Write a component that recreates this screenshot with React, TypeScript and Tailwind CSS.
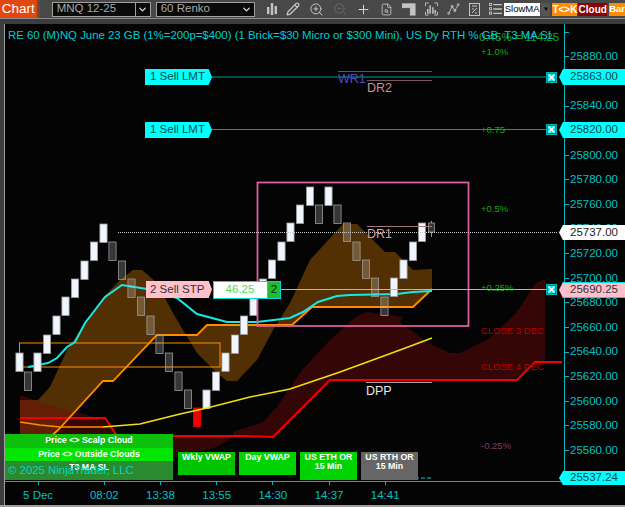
import React from "react";
import { ChevronDown, FileSearch, Pencil, Plus, ZoomIn, ZoomOut } from "lucide-react";

type BrickKind = "up" | "down" | "red";

// [center x, top y, kind] in page coordinates
const BRICKS: [number, number, BrickKind][] = [
  [19.5, 353, "up"], [28, 372, "down"], [37.5, 353, "up"], [47, 335, "up"], [56.5, 316, "up"],
  [65.5, 297, "up"], [75, 279, "up"], [84.5, 261, "up"], [94, 242, "up"], [103.5, 224, "up"],
  [112.5, 242, "down"], [122, 261, "down"], [131.5, 279, "down"], [141, 297, "down"], [150.5, 316, "down"],
  [159.5, 335, "down"], [169, 353, "down"], [178.5, 372, "down"], [188, 390, "down"], [197, 408, "red"],
  [206.5, 390, "up"], [216, 372, "up"], [225.5, 353, "up"], [235, 335, "up"], [244, 316, "up"],
  [253.5, 297, "up"], [263, 279, "up"], [272, 260, "up"], [281.5, 242, "up"], [290.5, 223, "up"],
  [300, 205, "up"], [310, 187, "up"], [319, 205, "down"], [328.5, 187, "up"], [337.5, 205, "down"],
  [347, 223, "down"], [356.5, 242, "down"], [366, 260, "down"], [375, 278, "down"], [384.5, 297, "down"],
  [394, 278, "up"], [403.5, 260, "up"], [413, 242, "up"], [422, 223, "up"],
];

const BROWN_CLOUD =
  "20,400 38,400 50,387 67,350 85,323 103,298 120,280 133,270 142,270 157,283 173,313 183,330 197,353 217,373 227,381 237,381 257,360 273,330 290,303 310,260 343,224 357,224 385,252 395,252 413,270 432,269 432,289 413,307 312,307 292,325 207,325 197,335 157,335 113,381 103,381 40,447 20,447";
const RED_CLOUD_LEFT = "20,395 43,403 67,410 80,413 103,420 120,437 60,447 20,447";
const RED_CLOUD_MAIN =
  "120,437 233,437 233,432 263,422 277,407 302,370 330,340 357,316 367,312 403,317 400,322 428,343 450,353 460,353 490,338 517,312 535,284 545,279 545,362 535,362 517,380 330,380 273,437 233,437 217,447 173,458";

const PRICES = [
  "25880.00", "25860.00", "25840.00", "25820.00", "25800.00", "25780.00", "25760.00", "25740.00", "25720.00",
  "25700.00", "25680.00", "25660.00", "25640.00", "25620.00", "25600.00", "25580.00", "25560.00",
];

const XBox = ({ top }: { top: string }) => (
  <svg className={`absolute left-[546px] h-[11px] w-[11px] ${top}`} viewBox="0 0 11 11">
    <rect x="0.5" y="0.5" width="10" height="10" fill="#008c8c" stroke="#00b0b0" />
    <rect x="2" y="2" width="7" height="7" fill="#00e0e0" />
    <path d="M2.5 2.5l6 6M8.5 2.5l-6 6" stroke="#fff" strokeWidth="1.6" />
  </svg>
);

const Dropdown = ({ label, split }: { label: string; split?: boolean }) => (
  <div className="flex h-[15px] w-[99px] items-center justify-between border border-[#a0a0a0] bg-[#0a0a0a] pl-1 text-[11.5px] text-[#a8a8a8]">
    <span>{label}</span>
    <span className={`flex h-full w-[15px] items-center justify-center ${split ? "border-l border-[#a0a0a0]" : ""}`}>
      <ChevronDown size={11} strokeWidth={3} color="#d8d8d8" />
    </span>
  </div>
);

const Toolbar = () => (
  <div className="flex h-[19px] shrink-0 items-center border-b border-[#8a8a8a] bg-[#484848]">
    <div className="flex h-full w-[37px] items-center justify-center bg-[#e2470f] text-[13.5px] text-white">Chart</div>
    <div className="h-full w-[3px] bg-[#6a4a3a]" />
    <div className="ml-[12px] flex gap-[5px]">
      <Dropdown label="MNQ 12-25" split />
      <Dropdown label="60 Renko" />
    </div>
    <div className="ml-[12px] flex w-[237px] shrink-0 items-center gap-[9px] text-[#c4c4c4]">
      <svg width="10" height="14" viewBox="0 0 10 14" fill="currentColor">
        <rect x="0" y="5" width="2.4" height="7" />
        <rect x="3.8" y="1" width="2.4" height="12" />
        <rect x="7.6" y="4" width="2.4" height="8" />
      </svg>
      <Pencil size={14} strokeWidth={2.2} />
      <ZoomIn size={15} strokeWidth={1.6} />
      <ZoomOut size={14} strokeWidth={1.6} className="text-[#6c6c6c]" />
      <Plus size={15} strokeWidth={1.6} className="text-[#d4d4d4]" />
      <FileSearch size={13} strokeWidth={1.6} />
      <svg width="14" height="14" viewBox="0 0 15 14" fill="none" stroke="currentColor">
        <rect x="0.5" y="1.5" width="9" height="4" fill="currentColor" />
        <rect x="9" y="1.5" width="5" height="12" fill="currentColor" />
      </svg>
      <svg width="13" height="14" viewBox="0 0 14 14" fill="none" stroke="currentColor">
        <path d="M0.5 4V0.5H4M10 0.5h3.5V4M13.5 10v3.5H10M4 13.5H0.5V10" />
        <path d="M3 12V7M5.5 12V3M8.5 12V5M11 12V8" strokeWidth="1.6" />
      </svg>
      <svg width="13" height="14" viewBox="0 0 15 14" fill="none" stroke="currentColor">
        <path d="M2 12L6 4l3 5 4-7" />
        <circle cx="2" cy="12" r="1.2" />
        <circle cx="6" cy="4" r="1.2" />
        <circle cx="9" cy="9" r="1.2" />
        <circle cx="13" cy="2" r="1.2" />
      </svg>
      <svg width="11" height="14" viewBox="0 0 11 14" fill="none" stroke="currentColor">
        <rect x="0.5" y="1.5" width="10" height="12" />
        <path d="M3 4h5M3 11l5-5M3 7h2M6 11h2" />
      </svg>
      <svg width="13" height="14" viewBox="0 0 15 14" fill="none" stroke="currentColor">
        <rect x="0.5" y="0.5" width="2.5" height="2.5" />
        <rect x="0.5" y="5.5" width="2.5" height="2.5" />
        <rect x="0.5" y="10.5" width="2.5" height="2.5" />
        <path d="M5 2h10M5 7h10M5 12h10" strokeWidth="1.5" />
      </svg>
    </div>
    <div className="flex h-[13px] w-[37px] items-center bg-white pl-[1px] text-[9.5px] text-black">SlowMA</div>
    <div className="ml-[1px] flex h-[13px] w-[9px] items-center justify-center bg-[#555] text-[6px] text-black">▼</div>
    <div className="ml-[2px] flex h-[13px] w-[25px] items-center justify-center bg-[#ff8c00] text-[10px] font-bold text-white">T&lt;&gt;K</div>
    <div className="ml-[1px] flex h-[13px] w-[29px] items-center justify-center bg-[#8b0000] text-[10px] font-bold text-white">Cloud</div>
    <div className="ml-[2px] flex h-[13px] flex-1 items-center bg-[#ff8c00] text-[9.5px] font-bold text-white">Bar</div>
  </div>
);

const PlotDrawing = () => (
  <svg className="block h-[457px] w-[559px]" viewBox="5 24 559 457">
    <polygon points={BROWN_CLOUD} fill="#523004" />
    <polygon points={RED_CLOUD_LEFT} fill="#7a0a0a" fillOpacity="0.42" />
    <polygon points={RED_CLOUD_MAIN} fill="#7a0a0a" fillOpacity="0.42" />
    <polyline points="20,418 105,418 117,436 245,436 273,437 330,380 517,380 535,362 562,362" fill="none" stroke="#f00000" strokeWidth="2" />
    <polyline points="40,446 58,430 103,381 113,381 157,335 197,335 207,325 292,325 312,307 413,307 432,289" fill="none" stroke="#ff8c00" strokeWidth="1.8" />
    <polyline points="20,422 40,425 60,427 103,427" fill="none" stroke="#ff8c00" strokeWidth="1.4" />
    <rect x="19.5" y="343" width="200.5" height="24" fill="none" stroke="#ff8c00" strokeWidth="1" />
    <polyline
      points="28,367 48,363 57,358 67,347 75,342 85,323 105,297 122,285 147,289 177,298 197,314 227,322 257,322 290,318 303,312 318,302 337,296 350,295 397,294 413,292 432,291"
      fill="none"
      stroke="#19e6e6"
      strokeWidth="2"
    />
    {BRICKS.map(([cx, top, kind]) => (
      <rect
        key={`${cx}-${top}`}
        x={cx - 3.6}
        y={top}
        width={7.2}
        height={18.5}
        fill={kind === "up" ? "#f0f5ff" : kind === "red" ? "#f00000" : "#ffffff"}
        fillOpacity={kind === "down" ? 0.2 : 1}
        stroke={kind === "red" ? "#f00000" : "#9a9a9a"}
        strokeWidth="0.8"
      />
    ))}
    <rect x="428.5" y="223" width="6" height="9" fill="#fff" fillOpacity="0.2" stroke="#9a9a9a" strokeWidth="0.8" />
    <path d="M431.5 221v2M431.5 232v5" stroke="#9a9a9a" />
    <polyline points="103,427 140,424 180,414 207,408 250,397 290,389 340,372 400,350 432,338" fill="none" stroke="#f0e010" strokeWidth="1.6" />
    <rect x="257.5" y="182.5" width="211" height="143.5" fill="none" stroke="#d8609c" strokeWidth="1.8" />

    <line x1="118" y1="232.5" x2="558" y2="232.5" stroke="#c8c8c8" strokeDasharray="1 1" />
    <line x1="275" y1="289.5" x2="547" y2="289.5" stroke="#d8a8b0" />
    <line x1="212" y1="77" x2="547" y2="77" stroke="#009c9c" />
    <line x1="212" y1="129.5" x2="547" y2="129.5" stroke="#009c9c" />

    <line x1="338" y1="71.5" x2="432" y2="71.5" stroke="#5a48b0" />
    <line x1="367" y1="80.5" x2="432" y2="80.5" stroke="#7a5a5a" />
    <line x1="367" y1="226.5" x2="432" y2="226.5" stroke="#a87878" />
    <line x1="366" y1="382.5" x2="432" y2="382.5" stroke="#a8a8a8" />
    <line x1="397" y1="478" x2="432" y2="478" stroke="#00c8d0" strokeDasharray="4 2" />

    <g fontSize="12.5">
      <text x="338" y="83" fill="#5a48c0">WR1</text>
      <text x="367" y="92" fill="#c89090">DR2</text>
      <text x="367" y="238" fill="#d8a0a0">DR1</text>
      <text x="366" y="395" fill="#e8e8e8">DPP</text>
    </g>
    <g fontSize="9.5" fill="#12a812">
      <text x="479" y="41" fill="#20a020" fontSize="11.5">0.45% = 114.25</text>
      <text x="481" y="55">+1.0%</text>
      <text x="481" y="133">+0.75</text>
      <text x="481" y="212">+0.5%</text>
      <text x="481" y="291">+0.25%</text>
      <text x="481" y="449" fill="#8a3a5a">-0.25%</text>
      <text x="481" y="334" fill="#b80000">CLOSE 3 DEC</text>
      <text x="481" y="370" fill="#b80000">CLOSE 4 DEC</text>
    </g>
  </svg>
);

const PriceAxis = () => (
  <div className="flex w-[61px] flex-col border-l border-[#00b4c0] text-[11.5px] leading-none text-[#00c0c8]">
    <div className="h-[20.7px] shrink-0">
      <div className="mt-[8px] h-px w-[4px] bg-[#00b4c0]" />
    </div>
    {PRICES.map((price) => (
      <div key={price} className="flex h-[24.6px] shrink-0 items-center gap-[1px]">
        <span className="h-px w-[4px] bg-[#00b4c0]" />
        <span>{price}</span>
      </div>
    ))}
  </div>
);

const TIMES = ["5 Dec", "08:02", "13:38", "13:55", "14:30", "14:37", "14:41"];

const TimeAxis = () => (
  <div className="flex h-[24px] border-t border-[#00b4c0] pl-[5px] text-[11.5px] text-[#00c0c8]">
    {TIMES.map((time, i) => (
      <div key={time} className={`flex w-[56.2px] flex-col items-center ${i === 1 ? "ml-[10px]" : ""}`}>
        <span className="h-[3px] w-px bg-[#00b4c0]" />
        <span className="mt-[5px] leading-none">{time}</span>
      </div>
    ))}
  </div>
);

const SIDE_BTN = "absolute top-[452px] w-[57px] pt-[1px] text-center text-[8.8px] leading-[9px] font-bold text-white";

const Overlays = () => (
  <>
    {/* title */}
    <div className="absolute top-[27px] left-[8px] text-[11.4px] whitespace-nowrap text-[#00cdd0]">
      RE 60 (M)NQ June 23 GB (1%=200p=$400) (1 Brick=$30 Micro or $300 Mini), US Dy RTH % GB; T3 MA SL
    </div>

    {/* order labels */}
    <div className="absolute top-[69px] left-[145px] flex h-[16px] w-[67px] items-center bg-[#00ffff] pl-[5px] text-[11.5px] text-[#0a4a4a] [clip-path:polygon(0_0,95%_0,100%_50%,95%_100%,0_100%)]">1 Sell LMT</div>
    <div className="absolute top-[122px] left-[145px] flex h-[16px] w-[67px] items-center bg-[#00ffff] pl-[5px] text-[11.5px] text-[#0a4a4a] [clip-path:polygon(0_0,95%_0,100%_50%,95%_100%,0_100%)]">1 Sell LMT</div>
    <div className="absolute top-[281px] left-[146px] flex h-[17px] w-[66px] items-center bg-[#ffc0cb] pl-[4px] text-[11.5px] text-[#333] [clip-path:polygon(0_0,95%_0,100%_50%,95%_100%,0_100%)]">2 Sell STP</div>
    <div className="absolute top-[281px] left-[212.5px] flex h-[18px] w-[55px] items-center justify-center border border-[#00d8d8] bg-white text-[11.5px] text-[#55d855]">46.25</div>
    <div className="absolute top-[281px] left-[267px] flex h-[18px] w-[14px] items-center justify-center border border-[#00d8d8] bg-[#22bb33] text-[11.5px] text-[#0a2a0a]">2</div>

    <XBox top="top-[72px]" />
    <XBox top="top-[124px]" />
    <XBox top="top-[284px]" />

    {/* price flags */}
    <div className="absolute top-[69px] left-[559px] flex h-[16px] w-[66px] items-center bg-[#00ffff] pl-[11px] text-[11.5px] text-[#0a4a4a] [clip-path:polygon(0_50%,6%_0,100%_0,100%_100%,6%_100%)]">25863.00</div>
    <div className="absolute top-[122px] left-[559px] flex h-[16px] w-[66px] items-center bg-[#00ffff] pl-[11px] text-[11.5px] text-[#0a4a4a] [clip-path:polygon(0_50%,6%_0,100%_0,100%_100%,6%_100%)]">25820.00</div>
    <div className="absolute top-[225px] left-[559px] flex h-[15px] w-[66px] items-center bg-white pl-[11px] text-[11.5px] text-[#222] [clip-path:polygon(0_50%,6%_0,100%_0,100%_100%,6%_100%)]">25737.00</div>
    <div className="absolute top-[282px] left-[559px] flex h-[16px] w-[66px] items-center border-y border-[#00e0e0] bg-[#ffc0cb] pl-[11px] text-[11.5px] text-[#333] [clip-path:polygon(0_50%,6%_0,100%_0,100%_100%,6%_100%)]">25690.25</div>
    <div className="absolute top-[471px] left-[559px] flex h-[14px] w-[66px] items-center bg-[#00ffff] pl-[11px] text-[11.5px] text-[#0a4a4a] [clip-path:polygon(0_50%,6%_0,100%_0,100%_100%,6%_100%)]">25537.24</div>

    {/* button panel */}
    <div className="absolute top-[434px] left-[5px] flex w-[168px] flex-col text-center text-[8.8px] font-bold text-white">
      <div className="flex h-[14px] items-center justify-center bg-[#0cc00c]">Price &lt;&gt; Scalp Cloud</div>
      <div className="flex h-[13px] items-center justify-center bg-[#00e600]">Price &lt;&gt; Outside Clouds</div>
      <div className="flex h-[19px] justify-center bg-[#2a8a30] pt-[1px] leading-[11px]">T3 MA SL</div>
    </div>
    <div className="absolute top-[462px] left-[8px] text-[11.4px] leading-[16px] whitespace-nowrap text-[#00d8c8]">© 2025 NinjaTrader, LLC</div>
    <div className={`${SIDE_BTN} left-[178px] h-[23px] bg-[#00c400]`}>Wkly VWAP</div>
    <div className={`${SIDE_BTN} left-[239px] h-[23px] bg-[#00d400]`}>Day VWAP</div>
    <div className={`${SIDE_BTN} left-[300px] h-[28px] bg-[#00d400]`}>US ETH OR 15 Min</div>
    <div className={`${SIDE_BTN} left-[361px] h-[28px] bg-[#666666]`}>US RTH OR 15 Min</div>
  </>
);

export default function App() {
  return (
    <div className="relative flex h-[507px] w-[625px] flex-col overflow-hidden bg-[#3c3c3c] font-['Liberation_Sans',Arial,sans-serif]">
      <Toolbar />
      <div className="mt-[5px] ml-[4px] flex flex-1 flex-col border-l border-[#a0a0a0] bg-[#040404]">
        <div className="flex h-[457px]">
          <PlotDrawing />
          <PriceAxis />
        </div>
        <TimeAxis />
      </div>
      <div className="h-[2px] shrink-0 bg-[#a0a0a0]" />
      <Overlays />
    </div>
  );
}
